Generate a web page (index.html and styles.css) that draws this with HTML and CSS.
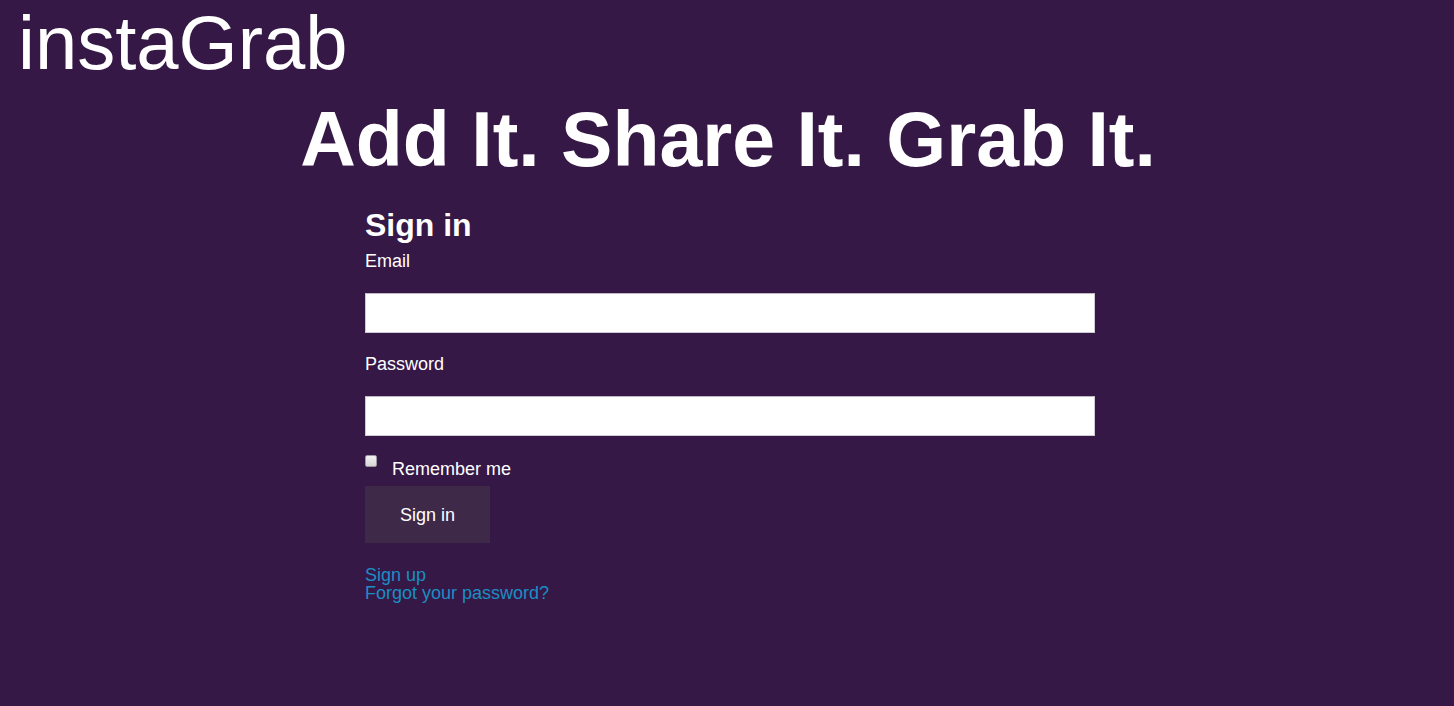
FILE: index.html
```html
<!DOCTYPE html>
<html lang="en">
<head>
<meta charset="utf-8">
<title>instaGrab</title>
<link rel="stylesheet" href="styles.css">
</head>
<body>
<header class="site-header">
  <div class="logo">instaGrab</div>
</header>
<main class="main">
  <h1 class="tagline">Add It. Share It. Grab It.</h1>
  <section class="signin">
    <h2 class="signin-title">Sign in</h2>
    <form class="signin-form">
      <label class="field-label" for="email">Email</label>
      <input class="field-input" id="email" type="email">
      <label class="field-label" for="password">Password</label>
      <input class="field-input" id="password" type="password">
      <div class="remember">
        <input class="remember-box" id="remember" type="checkbox">
        <label class="remember-label" for="remember">Remember me</label>
      </div>
      <button class="submit" type="button">Sign in</button>
    </form>
    <nav class="links">
      <a class="link" href="#">Sign up</a>
      <a class="link" href="#">Forgot your password?</a>
    </nav>
  </section>
</main>
</body>
</html>
```

FILE: styles.css
```css
html, body {
  margin: 0;
  padding: 0;
}

body {
  background: #361846;
  color: #ffffff;
  font-family: "Liberation Sans", Arial, Helvetica, sans-serif;
  min-height: 706px;
}

.site-header {
  padding: 4px 0 0 18px;
}

.logo {
  font-size: 76px;
  line-height: 78px;
  font-weight: normal;
}

.main {
  display: flex;
  flex-direction: column;
}

.tagline {
  margin: 19px 0 0 2px;
  font-size: 77px;
  line-height: 77px;
  font-weight: bold;
  text-align: center;
}

.signin {
  margin: 31px 0 0 365px;
  width: 730px;
  display: flex;
  flex-direction: column;
}

.signin-title {
  margin: 0;
  font-size: 32px;
  line-height: 32px;
  font-weight: bold;
}

.signin-form {
  display: flex;
  flex-direction: column;
  align-items: flex-start;
}

.field-label {
  font-size: 18px;
  line-height: 20px;
  margin-top: 21px;
}

.signin-title + .signin-form .field-label:first-child {
  margin-top: 10px;
}

.field-input {
  box-sizing: border-box;
  width: 730px;
  height: 40px;
  margin: 22px 0 0 0;
  border: 1px solid #cfcbd2;
  border-top-color: #bdb7c2;
  background: #ffffff;
  padding: 0 8px;
  font-size: 16px;
  font-family: inherit;
  outline: none;
}

.remember {
  display: flex;
  align-items: flex-start;
  margin-top: 19px;
}

.remember-box {
  appearance: none;
  -webkit-appearance: none;
  box-sizing: border-box;
  width: 12px;
  height: 12px;
  margin: 0;
  border: 1px solid #9d97a1;
  border-radius: 2px;
  background: linear-gradient(#f2f2f2, #d6d6d6);
}

.remember-label {
  font-size: 18px;
  line-height: 20px;
  margin: 4px 0 0 15px;
}

.submit {
  margin-top: 7px;
  width: 125px;
  height: 57px;
  border: none;
  background: #3e2a48;
  color: #ffffff;
  font-family: inherit;
  font-size: 18px;
  line-height: 20px;
  padding: 0;
  display: flex;
  align-items: center;
  justify-content: center;
  cursor: pointer;
}

.links {
  display: flex;
  flex-direction: column;
  align-items: flex-start;
  margin-top: 23px;
}

.link {
  color: #1a8ec4;
  text-decoration: none;
  font-size: 18px;
  line-height: 18px;
}
```
